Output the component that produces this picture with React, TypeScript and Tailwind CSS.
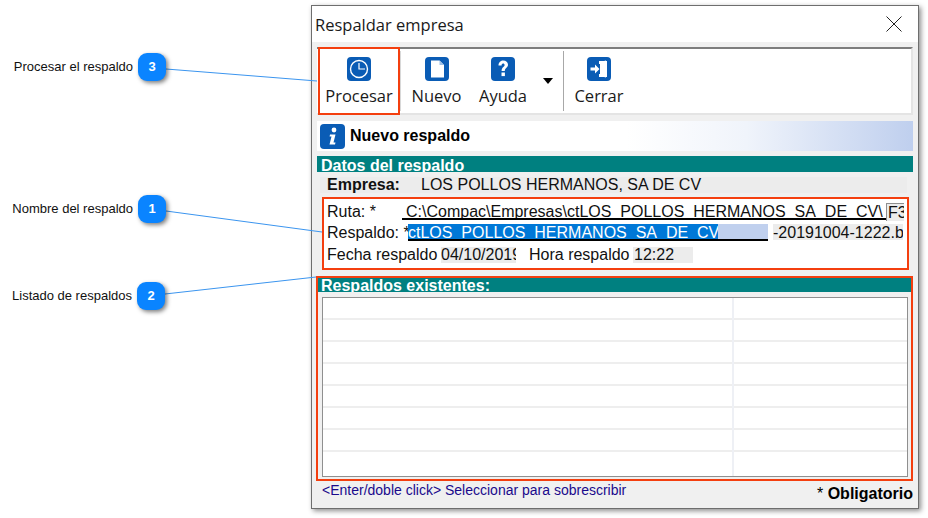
const arial = "font-['Liberation_Sans',Arial,sans-serif]";
const ui = "font-['Open_Sans','Noto_Sans',sans-serif]";

function IconTile({ children }: { children: React.ReactNode }) {
  return (
    <svg width="24" height="24" viewBox="0 0 24 24" className="block">
      <rect x="0" y="0" width="24" height="24" rx="4" fill="#0a5cb5" />
      {children}
    </svg>
  );
}

function ToolButton({ label, icon, className }: { label: string; icon: React.ReactNode; className: string }) {
  return (
    <div className={`flex flex-col items-center pt-[8px] ${className}`}>
      {icon}
      <span className={`${ui} text-[16.5px] leading-[24px] mt-[3px] text-[#1a1a1a]`}>{label}</span>
    </div>
  );
}

function Callout({ n, label, top, left, labelRight }: { n: number; label: string; top: number; left: number; labelRight: number }) {
  return (
    <>
      <span
        className={`absolute ${arial} text-[13px] leading-[15px] text-[#111] whitespace-nowrap text-right`}
        style={{ top: top + 6, right: 928 - labelRight }}
      >
        {label}
      </span>
      <div
        className={`absolute w-[28px] h-[28px] rounded-[9px] bg-[#0a84ff] text-white ${arial} font-bold text-[13px] flex items-center justify-center shadow-[2px_2px_4px_rgba(0,0,0,0.5)]`}
        style={{ top, left }}
      >
        {n}
      </div>
    </>
  );
}

export default function App() {
  return (
    <div className="relative w-[928px] h-[518px] bg-white overflow-hidden pl-[311px] pt-[5px]">
      <div className="w-[608px] h-[504px] border border-[#6e6e6e] bg-[#f0f0f0] shadow-[2px_2px_5px_rgba(0,0,0,0.45)] flex flex-col">
        {/* title */}
        <div className="h-[36px] bg-white flex items-center justify-between pl-[3px] pr-[16px] shrink-0">
          <span className={`${ui} text-[16.5px] leading-[24px] mt-[2px] text-[#1a1a1a]`}>Respaldar empresa</span>
          <svg width="16" height="16" viewBox="0 0 16 16">
            <path d="M0.5 0.5 L15.5 15.5 M15.5 0.5 L0.5 15.5" stroke="#222" strokeWidth="1" fill="none" />
          </svg>
        </div>
        {/* toolbar */}
        <div className="mt-[5px] ml-[5px] mr-[5px] h-[68px] bg-white border-t-2 border-t-[#7d7d7d] border-r-2 border-r-[#e4e4e4] border-b-2 border-b-[#e4e4e4] flex shrink-0 relative">
          <div className="w-[82px] h-[68px] -mt-[2px] ml-px border-[2.5px] border-[#f43f0f] flex justify-center shrink-0">
            <ToolButton
              label="Procesar"
              className=""
              icon={
                <IconTile>
                  <circle cx="12" cy="12" r="8.5" fill="#0a5cb5" stroke="#fff" strokeWidth="1.4" />
                  <path d="M12 6 V12 H18" stroke="#fff" strokeWidth="1.2" fill="none" />
                </IconTile>
              }
            />
          </div>
          <div className="w-px h-[60px] mt-[2px] bg-[#d8d8d8] shrink-0" />
          <ToolButton
            label="Nuevo"
            className="w-[66px] pl-[5px] shrink-0 pt-[6px]"
            icon={
              <IconTile>
                <path d="M6 3.5 H14.5 L19 8 V20.5 H6 Z" fill="#fff" />
                <path d="M14.5 3.5 V8 H19" fill="#9cc0e8" />
              </IconTile>
            }
          />
          <ToolButton
            label="Ayuda"
            className="w-[66px] ml-[3px] shrink-0 pt-[6px]"
            icon={
              <IconTile>
                <path
                  d="M7.5 8.5 C7.5 5 10 3.5 12.2 3.5 C15 3.5 17 5.2 17 7.8 C17 10.6 13.8 11 13.8 14 H10.6 C10.6 10 13.6 10 13.6 8 C13.6 7 13 6.4 12.1 6.4 C11 6.4 10.6 7.2 10.6 8.5 Z"
                  fill="#fff"
                />
                <rect x="10.5" y="15.5" width="3.4" height="3.6" fill="#fff" />
              </IconTile>
            }
          />
          <div className="w-[10px] ml-[7px] mt-[29px] h-0 border-x-[5px] border-x-transparent border-t-[6px] border-t-black shrink-0" />
          <div className="w-px h-[60px] mt-[2px] ml-[10px] bg-[#a8a8a8] shrink-0" />
          <ToolButton
            label="Cerrar"
            className="w-[68px] ml-[1px] shrink-0 pt-[6px]"
            icon={
              <IconTile>
                <path d="M12 4 H20 V20 H12 V17 H18 V7 H12 Z" fill="#fff" />
                <path d="M13 5 L19 3.5 V20.5 L13 19 Z" fill="#fff" />
                <path d="M3.5 10.5 H8 V7.5 L12.5 12 L8 16.5 V13.5 H3.5 Z" fill="#fff" />
              </IconTile>
            }
          />
        </div>
        {/* info band */}
        <div className="mt-[6px] ml-[5px] h-[30px] w-[596px] bg-[linear-gradient(90deg,#ffffff_0%,#ffffff_52%,#f0f4fb_72%,#bfcfee_100%)] flex items-center pl-[3px] shrink-0">
          <svg width="25" height="25" viewBox="0 0 25 25">
            <rect width="25" height="25" rx="4" fill="#0a5cb5" />
            <circle cx="14" cy="6" r="2.4" fill="#fff" />
            <path d="M10 10.5 H15.5 L13.5 18.5 H15.5 L15 20.5 H9.5 L11.5 12.5 H9.6 Z" fill="#fff" />
          </svg>
          <span className={`${arial} font-bold text-[16px] ml-[5px] text-black`}>Nuevo respaldo</span>
        </div>
        {/* datos */}
        <div className={`${arial} mt-[5px] ml-[5px] w-[596px] h-[16px] bg-[#008080] pl-[4px] text-white font-bold text-[16px] leading-[19px] overflow-hidden shrink-0`}>
          Datos del respaldo
        </div>
        <div className={`${arial} mt-[5px] ml-[8px] w-[587px] h-[16px] bg-[#ececec] flex items-center text-[16px] text-[#111] shrink-0`}>
          <span className="font-bold ml-[7px] w-[94px]">Empresa:</span>
          <span>LOS POLLOS HERMANOS, SA DE CV</span>
        </div>
        {/* campos */}
        <div className={`${arial} mt-[4px] ml-[10px] w-[587px] h-[73px] bg-white border-[2.5px] border-[#f43f0f] text-[16px] text-[#111] flex flex-col pl-[3px] shrink-0`}>
          <div className="flex items-start h-[21px] mt-[4px]">
            <span className="w-[75px] leading-[17px] shrink-0">Ruta: *</span>
            <div className="w-[484px] h-[17px] pl-[4px] border-b-2 border-black overflow-hidden leading-[17px] whitespace-nowrap shrink-0">
              {"C:\\Compac\\Empresas\\ctLOS_POLLOS_HERMANOS_SA_DE_CV\\"}
            </div>
            <div className="w-[18px] h-[18px] bg-[#ececec] border-l border-t border-[#8f8f8f] leading-[18px] overflow-hidden shrink-0 pl-px">F3</div>
          </div>
          <div className="flex items-start h-[21px]">
            <span className="w-[81px] leading-[17px] shrink-0 whitespace-nowrap">Respaldo: *</span>
            <div className="w-[360px] h-[17px] border-b-2 border-black flex overflow-hidden bg-[#c0d0ee] shrink-0">
              <span className="w-[310px] h-[15px] bg-[#0078d7] text-white leading-[17px] whitespace-nowrap overflow-hidden block">
                ctLOS_POLLOS_HERMANOS_SA_DE_CV
              </span>
            </div>
            <div className="ml-[5px] w-[130px] h-[16px] bg-[#ececec] leading-[17px] whitespace-nowrap overflow-hidden shrink-0">-20191004-1222.bak</div>
          </div>
          <div className="flex items-center h-[17px] mt-px">
            <span className="w-[114px] shrink-0">Fecha respaldo</span>
            <div className="w-[75px] h-[16px] bg-[#ececec] leading-[16px] whitespace-nowrap overflow-hidden shrink-0">04/10/2019</div>
            <span className="ml-[13px] w-[104px] shrink-0">Hora respaldo</span>
            <div className="w-[60px] h-[16px] bg-[#ececec] leading-[16px] pl-px shrink-0">12:22</div>
          </div>
        </div>
        {/* existentes */}
        <div className="mt-[6px] ml-[4px] w-[597px] h-[205px] border-[2.5px] border-[#f43f0f] shrink-0">
          <div className={`${arial} h-[14px] bg-[#008080] pl-[3px] text-white font-bold text-[16px] leading-[15px] overflow-hidden`}>
            Respaldos existentes:
          </div>
          <div className="mt-[5px] ml-[4px] w-[586px] h-[180px] bg-white border border-[#8f8f8f] flex">
            <div className="w-[411px] border-r-2 border-[#eef0f5] flex flex-col shrink-0">
              {[0, 1, 2, 3, 4, 5, 6].map((i) => (
                <div key={i} className="h-[22px] border-b-2 border-[#eeeeee] shrink-0" />
              ))}
            </div>
            <div className="flex-1 flex flex-col">
              {[0, 1, 2, 3, 4, 5, 6].map((i) => (
                <div key={i} className="h-[22px] border-b-2 border-[#eeeeee] shrink-0" />
              ))}
            </div>
          </div>
        </div>
        {/* footer */}
        <div className={`${arial} flex justify-between ml-[10px] mr-[5px] flex-1`}>
          <span className="text-[14px] leading-[16px] mt-[1px] text-[#1a0a8c]">{"<Enter/doble click> Seleccionar para sobrescribir"}</span>
          <span className="text-[16px] font-bold text-black leading-[18px] mt-[4px]">
            <span className="font-normal">* </span>Obligatorio
          </span>
        </div>
      </div>

      {/* annotation leader lines */}
      <svg className="absolute left-0 top-0 pointer-events-none" width="928" height="518">
        <path d="M166 69 L317 81" stroke="#3b95ef" strokeWidth="1" fill="none" />
        <path d="M166 211 L322 232" stroke="#3b95ef" strokeWidth="1" fill="none" />
        <path d="M165 294 L316 277" stroke="#3b95ef" strokeWidth="1" fill="none" />
      </svg>
      <Callout n={3} label="Procesar el respaldo" top={53} left={138} labelRight={133} />
      <Callout n={1} label="Nombre del respaldo" top={195} left={138} labelRight={133} />
      <Callout n={2} label="Listado de respaldos" top={282} left={137} labelRight={132} />
    </div>
  );
}
